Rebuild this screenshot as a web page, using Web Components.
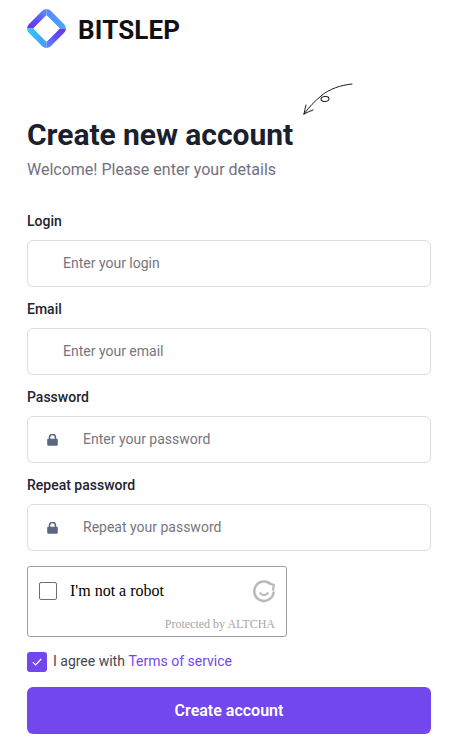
<!DOCTYPE html>
<html lang="en">
<head>
<meta charset="utf-8">
<title>Create new account</title>
<style>
  html, body { margin: 0; padding: 0; background: #fff; }
  body { font-family: Roboto, sans-serif; }
</style>
</head>
<body>
<signup-page>
  <brand-logo slot="brand">BITSLEP</brand-logo>
  <form-field label="Login" placeholder="Enter your login"></form-field>
  <form-field label="Email" placeholder="Enter your email"></form-field>
  <form-field label="Password" placeholder="Enter your password" locked></form-field>
  <form-field label="Repeat password" placeholder="Repeat your password" locked></form-field>
  <altcha-box></altcha-box>
  <agree-check>I agree with <a slot="link">Terms of service</a></agree-check>
  <submit-button>Create account</submit-button>
</signup-page>

<script>
class signupPage extends HTMLElement {
  constructor() {
    super();
    this.attachShadow({ mode: "open" });
    this.shadowRoot.innerHTML = `
      <style>
        :host { display: block; box-sizing: border-box; width: 459px; height: 748px; padding: 9px 28px 0 27px; overflow: hidden; }
        .head { position: relative; margin-top: 34px; padding-top: 35px; }
        .arrow { position: absolute; left: 276px; top: 0; }
        h1 { margin: 0; font: 700 30px/36px Roboto, sans-serif; color: #1a202c; letter-spacing: -.05px; }
        p { margin: 5px 0 0; font: 400 16px/24px Roboto, sans-serif; color: #71717f; }
        .fields { margin-top: 29px; }
      </style>
      <slot name="brand"></slot>
      <div class="head">
        <svg class="arrow" width="50" height="36" viewBox="0 0 50 36" fill="none" stroke="#1b1b20" stroke-linecap="round" stroke-width="1">
          <path d="M49 2C38 3 26 7 18 14C12 19 6 25 1 32"/>
          <path d="M1 32C1.500 29 2.200 26 3 23M1 32C4 30.500 7 29 10 28"/>
          <ellipse cx="22" cy="17" rx="4" ry="2.400" transform="rotate(-6 22 17)"/>
        </svg>
        <h1>Create new account</h1>
        <p>Welcome! Please enter your details</p>
      </div>
      <div class="fields"><slot></slot></div>
    `;
  }
}

class brandLogo extends HTMLElement {
  constructor() {
    super();
    this.attachShadow({ mode: "open" });
    this.shadowRoot.innerHTML = `
      <style>
        :host { display: flex; align-items: center; gap: 12px; height: 39px; font: 700 26px/39px Roboto, sans-serif; color: #111114; letter-spacing: .15px; }
        svg { display: block; flex: none; }
        .name { padding-top: 3px; }
      </style>
      <svg width="39" height="39" viewBox="0 0 39 39">
        <defs>
          <linearGradient id="ul" x1="4" y1="19" x2="19" y2="3" gradientUnits="userSpaceOnUse">
            <stop offset="0" stop-color="#6638f0"/>
            <stop offset=".45" stop-color="#6150f5"/>
            <stop offset="1" stop-color="#5a88fb"/>
          </linearGradient>
          <linearGradient id="ur" x1="19" y1="3" x2="36" y2="19" gradientUnits="userSpaceOnUse">
            <stop offset="0" stop-color="#5a88fb"/>
            <stop offset="1" stop-color="#46a8fb"/>
          </linearGradient>
          <linearGradient id="ll" x1="3" y1="20" x2="19" y2="36" gradientUnits="userSpaceOnUse">
            <stop offset="0" stop-color="#2cc8fb"/>
            <stop offset="1" stop-color="#4c98fb"/>
          </linearGradient>
          <linearGradient id="lr" x1="36" y1="20" x2="19" y2="36" gradientUnits="userSpaceOnUse">
            <stop offset="0" stop-color="#6638f0"/>
            <stop offset=".45" stop-color="#6150f5"/>
            <stop offset="1" stop-color="#5a88fb"/>
          </linearGradient>
          <clipPath id="shape">
            <rect x="4" y="4" width="31" height="31" rx="6" transform="rotate(45 19.500 19.500)"/>
          </clipPath>
        </defs>
        <g clip-path="url(#shape)">
          <rect x="0" y="0" width="19.500" height="19.500" fill="url(#ul)"/>
          <rect x="19.500" y="0" width="19.500" height="19.500" fill="url(#ur)"/>
          <rect x="0" y="19.500" width="19.500" height="19.500" fill="url(#ll)"/>
          <rect x="19.500" y="19.500" width="19.500" height="19.500" fill="url(#lr)"/>
        </g>
        <path d="M19.500 7.500L31.500 19.500L19.500 31.500L7.500 19.500Z" fill="#fff" stroke="#fff" stroke-width="2" stroke-linejoin="round"/>
      </svg>
      <span class="name"><slot></slot></span>
    `;
  }
}

class formField extends HTMLElement {
  constructor() {
    super();
    this.attachShadow({ mode: "open" });
  }
  connectedCallback() {
    const locked = this.hasAttribute("locked");
    this.shadowRoot.innerHTML = `
      <style>
        :host { display: block; margin-bottom: 12px; }
        label { display: block; font: 500 14px/21px Roboto, sans-serif; color: #24242e; margin-bottom: 8px; }
        .box { box-sizing: border-box; display: flex; align-items: center; height: 47px; border: 1px solid #dcdce2; border-radius: 6px; padding-left: 35px; }
        .box.locked { padding-left: 19px; }
        svg { flex: none; margin-right: 25px; }
        input { flex: 1; min-width: 0; border: 0; outline: 0; padding: 0; background: none; font: 400 14px/21px Roboto, sans-serif; color: #1a1a24; }
        input::placeholder { color: #777580; opacity: 1; }
      </style>
      <label>${this.getAttribute("label")}</label>
      <div class="box ${locked ? "locked" : ""}">
        ${locked ? `<svg width="11" height="12" viewBox="0 0 11 12"><path d="M2.500 5V3.500a3 3 0 0 1 6 0V5" fill="none" stroke="#5c6680" stroke-width="1.600"/><rect x=".2" y="4.800" width="10.600" height="7" rx="1.200" fill="#5c6680"/></svg>` : ""}
        <input type="text" placeholder="${this.getAttribute("placeholder")}">
      </div>
    `;
  }
}

class altchaBox extends HTMLElement {
  constructor() {
    super();
    this.attachShadow({ mode: "open" });
    this.shadowRoot.innerHTML = `
      <style>
        :host { display: block; box-sizing: border-box; width: 260px; height: 71px; margin-top: 15px; border: 1px solid #9e9e9e; border-radius: 3px; font-family: "Liberation Serif", serif; padding: 0 11px; }
        .row { display: flex; align-items: center; height: 47px; }
        .tick { box-sizing: border-box; width: 18px; height: 18px; border: 1px solid #6f6f6f; border-radius: 2px; margin-right: 13px; }
        .txt { flex: 1; font-size: 16px; color: #000; }
        .foot { text-align: right; font-size: 12px; line-height: 14px; color: #a6a6a6; margin-top: 3px; }
      </style>
      <div class="row">
        <span class="tick"></span>
        <span class="txt">I'm not a robot</span>
        <svg width="22" height="24" viewBox="0 0 22 24" fill="none" stroke="#b9b9b9" stroke-width="2.500">
          <path d="M18 5.500A9.700 9.700 0 1 0 20.700 12.500"/>
          <path d="M14.500 3.500L20.800 6L20 11.500" stroke-width="2.200"/>
          <path d="M6.800 13.500A4.800 4.800 0 0 0 15.200 13.500" stroke-width="2.100"/>
        </svg>
      </div>
      <div class="foot">Protected by ALTCHA</div>
    `;
  }
}

class agreeCheck extends HTMLElement {
  constructor() {
    super();
    this.attachShadow({ mode: "open" });
    this.shadowRoot.innerHTML = `
      <style>
        :host { display: flex; align-items: center; height: 21px; margin-top: 14px; font: 400 14px/21px Roboto, sans-serif; color: #46464f; }
        .box { display: flex; align-items: center; justify-content: center; width: 20px; height: 20px; border-radius: 3px; background: #7247ee; margin-right: 6px; flex: none; }
        ::slotted(a) { color: #7247ee; margin-left: .25em; }
      </style>
      <span class="box"><svg width="10" height="8" viewBox="0 0 10 8" fill="none" stroke="#fff" stroke-width="1.200"><path d="M.8 4.200L3.600 7L9.200 1"/></svg></span>
      <slot></slot><slot name="link"></slot>
    `;
  }
}

class submitButton extends HTMLElement {
  constructor() {
    super();
    this.attachShadow({ mode: "open" });
    this.shadowRoot.innerHTML = `
      <style>
        :host { display: block; margin-top: 15px; }
        button { display: block; width: 100%; height: 47px; border: 0; border-radius: 6px; background: #7247ee; color: #fff; font: 600 16px/24px Roboto, sans-serif; cursor: pointer; }
      </style>
      <button><slot></slot></button>
    `;
  }
}

customElements.define("signup-page", signupPage);
customElements.define("brand-logo", brandLogo);
customElements.define("form-field", formField);
customElements.define("altcha-box", altchaBox);
customElements.define("agree-check", agreeCheck);
customElements.define("submit-button", submitButton);
</script>
</body>
</html>
